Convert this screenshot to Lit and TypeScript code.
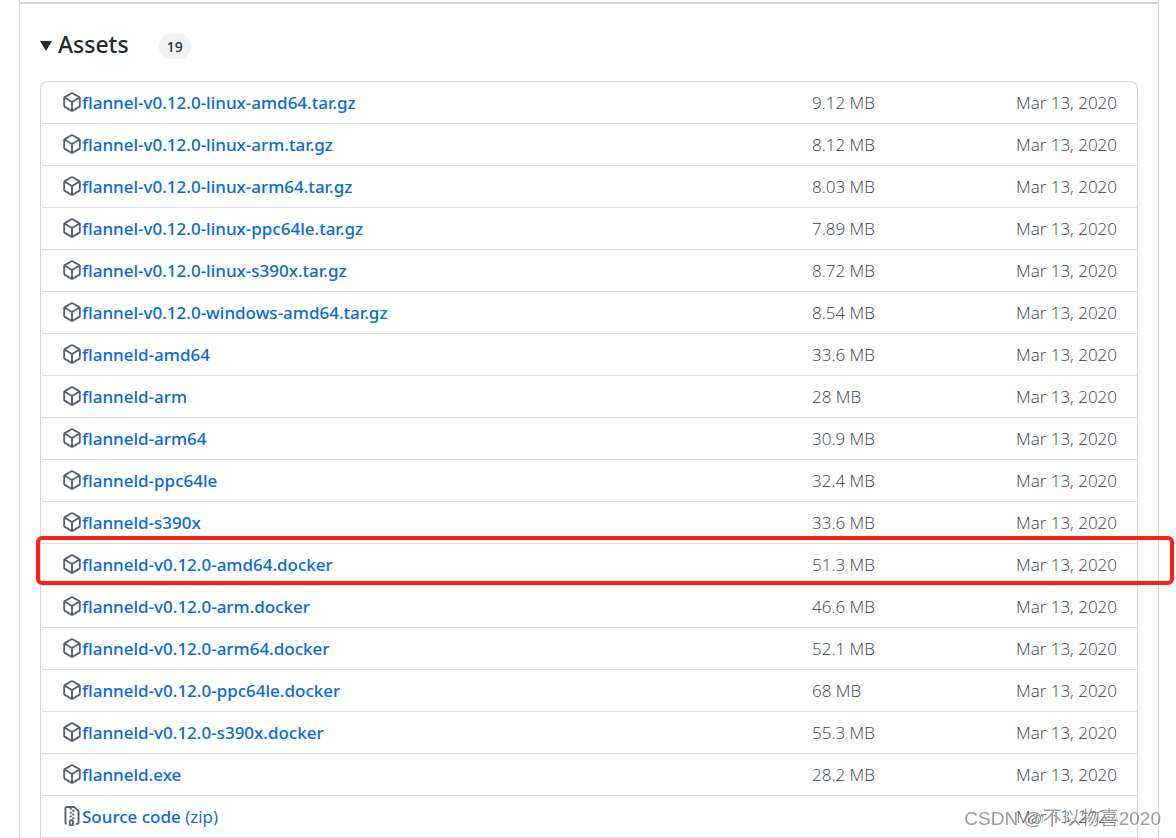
import { LitElement, html, css, svg } from "lit";
import { customElement } from "lit/decorators.js";
import { classMap } from "lit/directives/class-map.js";

interface Asset {
  name: string;
  size?: string;
  format?: string;
  marked?: boolean;
}

const RELEASE_DATE = "Mar 13, 2020";

const ASSETS: Asset[] = [
  { name: "flannel-v0.12.0-linux-amd64.tar.gz", size: "9.12 MB" },
  { name: "flannel-v0.12.0-linux-arm.tar.gz", size: "8.12 MB" },
  { name: "flannel-v0.12.0-linux-arm64.tar.gz", size: "8.03 MB" },
  { name: "flannel-v0.12.0-linux-ppc64le.tar.gz", size: "7.89 MB" },
  { name: "flannel-v0.12.0-linux-s390x.tar.gz", size: "8.72 MB" },
  { name: "flannel-v0.12.0-windows-amd64.tar.gz", size: "8.54 MB" },
  { name: "flanneld-amd64", size: "33.6 MB" },
  { name: "flanneld-arm", size: "28 MB" },
  { name: "flanneld-arm64", size: "30.9 MB" },
  { name: "flanneld-ppc64le", size: "32.4 MB" },
  { name: "flanneld-s390x", size: "33.6 MB" },
  { name: "flanneld-v0.12.0-amd64.docker", size: "51.3 MB", marked: true },
  { name: "flanneld-v0.12.0-arm.docker", size: "46.6 MB" },
  { name: "flanneld-v0.12.0-arm64.docker", size: "52.1 MB" },
  { name: "flanneld-v0.12.0-ppc64le.docker", size: "68 MB" },
  { name: "flanneld-v0.12.0-s390x.docker", size: "55.3 MB" },
  { name: "flanneld.exe", size: "28.2 MB" },
  { name: "Source code", format: "(zip)" },
];

const packagePath = svg`<path d="m8.878.392 5.25 3.045c.54.314.872.89.872 1.514v6.098a1.75 1.75 0 0 1-.872 1.514l-5.25 3.045a1.75 1.75 0 0 1-1.756 0l-5.25-3.045A1.75 1.75 0 0 1 1 11.049V4.951c0-.624.332-1.201.872-1.514L7.122.392a1.75 1.75 0 0 1 1.756 0ZM7.875 1.69l-4.63 2.685L8 7.133l4.755-2.758-4.63-2.685a.248.248 0 0 0-.25 0ZM2.5 5.677v5.372c0 .09.047.171.125.216l4.625 2.683V8.432Zm6.25 8.271 4.625-2.683a.25.25 0 0 0 .125-.216V5.677L8.75 8.432Z"/>`;

const zipPath = svg`<path d="M3.5 1.75v11.5c0 .09.048.173.126.217a.75.75 0 0 1-.752 1.298A1.748 1.748 0 0 1 2 13.25V1.75C2 .784 2.784 0 3.75 0h5.586c.464 0 .909.185 1.237.513l2.914 2.914c.329.328.513.773.513 1.237v8.586A1.75 1.75 0 0 1 12.25 15h-.5a.75.75 0 0 1 0-1.5h.5a.25.25 0 0 0 .25-.25V4.664a.25.25 0 0 0-.073-.177L9.513 1.573a.25.25 0 0 0-.177-.073H7.25a.75.75 0 0 1 0 1.5h-.5a.75.75 0 0 1 0-1.5h-3a.25.25 0 0 0-.25.25Zm3.75 8.75h.5c.966 0 1.75.784 1.75 1.75v3a.75.75 0 0 1-.75.75h-2.5a.75.75 0 0 1-.75-.75v-3c0-.966.784-1.75 1.75-1.75ZM6 5.25a.75.75 0 0 1 .75-.75h.5a.75.75 0 0 1 0 1.5h-.5A.75.75 0 0 1 6 5.25Zm.75 2.25h.5a.75.75 0 0 1 0 1.5h-.5a.75.75 0 0 1 0-1.5ZM8 6.75A.75.75 0 0 1 8.75 6h.5a.75.75 0 0 1 0 1.5h-.5A.75.75 0 0 1 8 6.75ZM8.75 3h.5a.75.75 0 0 1 0 1.5h-.5a.75.75 0 0 1 0-1.5ZM8 9.75A.75.75 0 0 1 8.75 9h.5a.75.75 0 0 1 0 1.5h-.5A.75.75 0 0 1 8 9.75ZM7 12.25v2.25h1v-2.25a.25.25 0 0 0-.25-.25h-.5a.25.25 0 0 0-.25.25Z"/>`;

@customElement("app-root")
export class AppRoot extends LitElement {
  static styles = css`
    :host {
      display: block;
      box-sizing: border-box;
      min-height: 100vh;
      padding: 0 17px 0 19px;
      background: #ffffff;
      color: #24292f;
      font-family: "Segoe UI", "Open Sans", "Noto Sans", sans-serif;
      font-size: 17px;
      line-height: 24px;
    }
    .card {
      box-sizing: border-box;
      min-height: 100vh;
      padding: 2px 20px 0;
      border: solid #d0d7de;
      border-width: 0 1px;
      display: flex;
      flex-direction: column;
    }
    .rule {
      height: 2px;
      margin: 0 -20px;
      background: #d0d7de;
    }
    .summary {
      display: flex;
      align-items: center;
      padding: 22px 0 19px;
      list-style: none;
      cursor: pointer;
    }
    .summary::-webkit-details-marker {
      display: none;
    }
    .arrow {
      width: 12px;
      height: 10px;
      margin: 4px 6px 0 0;
      fill: #24292f;
    }
    .title {
      margin: 0;
      font-family: "Segoe UI", "Noto Sans", sans-serif;
      font-size: 23px;
      line-height: 36px;
      font-weight: 500;
    }
    .count {
      margin: 4px 0 0 30px;
      padding: 0 8px;
      border-radius: 12px;
      background: #eff1f3;
      font-family: "Segoe UI", "Noto Sans", sans-serif;
      font-size: 14px;
      line-height: 25px;
      font-weight: 500;
    }
    .box {
      border: solid #d0d7de;
      border-width: 1px 1px 0;
      border-radius: 8px 8px 0 0;
      padding: 0 0 1px 1px;
    }
    .assets {
      width: 100%;
      border-spacing: 0;
      table-layout: fixed;
    }
    .row {
      position: relative;
    }
    .cell {
      height: 41px;
      padding: 0;
      border-bottom: 1px solid #d8dee4;
      font-weight: 300;
      text-align: left;
      color: #363d46;
      white-space: nowrap;
    }
    .size {
      width: 175px;
    }
    .date {
      width: 130px;
      padding-right: 20px;
      text-align: right;
    }
    .file {
      display: flex;
      align-items: center;
      padding-left: 20px;
    }
    .icon {
      width: 20px;
      height: 20px;
      margin-bottom: 2px;
      fill: #57606a;
    }
    .link {
      color: #0969da;
      font-weight: 400;
      text-decoration: none;
    }
    .strong {
      font-family: "Segoe UI", "Noto Sans", sans-serif;
      font-weight: 500;
    }
    .marked .date::after {
      content: "";
      position: absolute;
      inset: -8px -37px 1px -6px;
      border: 4px solid #fb2114;
      border-radius: 6px;
      pointer-events: none;
    }
    .watermark {
      position: fixed;
      right: 15px;
      bottom: 6px;
      color: rgba(120, 120, 120, 0.75);
      font-family: "Liberation Sans", "Noto Sans CJK SC", sans-serif;
      font-size: 19px;
      line-height: 26px;
      text-shadow: 1px 1px 0 #ffffff;
      pointer-events: none;
    }
  `;

  private renderAsset(asset: Asset) {
    return html`
      <tr class=${classMap({ row: true, marked: !!asset.marked })}>
        <th class="cell" scope="row">
          <div class="file">
            <svg class="icon" viewBox="0 0 16 16" aria-hidden="true">
              ${asset.format ? zipPath : packagePath}
            </svg>
            <a class="link" href="#"><span class="strong">${asset.name}</span>${asset.format ? ` ${asset.format}` : ""}</a>
          </div>
        </th>
        <td class="cell size">${asset.size ?? ""}</td>
        <td class="cell date">${RELEASE_DATE}</td>
      </tr>
    `;
  }

  render() {
    return html`
      <main class="card">
        <div class="rule"></div>
        <details open>
          <summary class="summary">
            <svg class="arrow" viewBox="0 0 12 10" aria-hidden="true"><path d="M0 0H12L6 10Z" /></svg>
            <h3 class="title">Assets</h3>
            <span class="count">19</span>
          </summary>
          <div class="box">
            <table class="assets">
              <tbody>
                ${ASSETS.map((asset) => this.renderAsset(asset))}
              </tbody>
            </table>
          </div>
        </details>
      </main>
      <div class="watermark">CSDN @不以物喜2020</div>
    `;
  }
}
